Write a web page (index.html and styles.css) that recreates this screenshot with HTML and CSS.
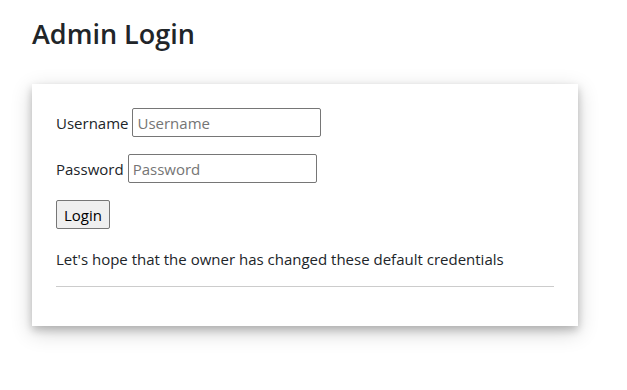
FILE: index.html
```html
<!DOCTYPE html>
<html lang="en">
<head>
    <meta charset="UTF-8">
    <meta name="viewport" content="width=device-width, initial-scale=1.0">
    <title>Admin Login</title>
    <link rel="stylesheet" href="styles.css">
</head>
<body>
    <h1>Admin Login</h1>

    <div class="login-card">
        <form class="login-form" onsubmit="return false">
            <div class="form-row">
                <label for="username">Username</label>
                <input type="text" id="username" placeholder="Username">
            </div>
            <div class="form-row">
                <label for="password">Password</label>
                <input type="password" id="password" placeholder="Password">
            </div>
            <div class="form-row">
                <button type="submit" class="login-button">Login</button>
            </div>
        </form>
        <p class="hint">Let's hope that the owner has changed these default credentials</p>
        <hr>
    </div>
</body>
</html>
```

FILE: styles.css
```css
* {
    margin: 0;
    padding: 0;
    box-sizing: border-box;
}

html {
    background: #fff;
}

body {
    font-family: "Open Sans", "Noto Sans", sans-serif;
    font-size: 15px;
    color: #212529;
    background: #fff;
    min-height: 100vh;
    padding: 0 32px 48px;
}

h1 {
    font-size: 27px;
    font-weight: 600;
    line-height: 34px;
    margin-top: 17px;
    margin-bottom: 33px;
}

.login-card {
    width: 546px;
    padding: 24px;
    background: #fff;
    box-shadow: 0 4px 8px 0 rgba(0, 0, 0, 0.2), 0 6px 20px 0 rgba(0, 0, 0, 0.19);
}

.form-row {
    display: flex;
    align-items: center;
    margin-bottom: 17px;
}

.form-row:last-child {
    margin-bottom: 0;
}

label {
    margin-right: 4px;
}

input {
    width: 189px;
    height: 29px;
    padding: 0 4px;
    font-family: inherit;
    font-size: 15px;
    color: #212529;
    border: 1px solid #767676;
    border-radius: 2px;
}

input::placeholder {
    color: #757575;
}

.login-button {
    height: 29px;
    padding: 0 7px;
    font-family: inherit;
    font-size: 15px;
    color: #000;
    background: #efefef;
    border: 1px solid #767676;
    border-radius: 2px;
}

.hint {
    line-height: 20px;
    margin-top: 20px;
    margin-bottom: 17px;
}

hr {
    border: none;
    border-top: 1px solid #ccc;
    margin-bottom: 15px;
}
```
